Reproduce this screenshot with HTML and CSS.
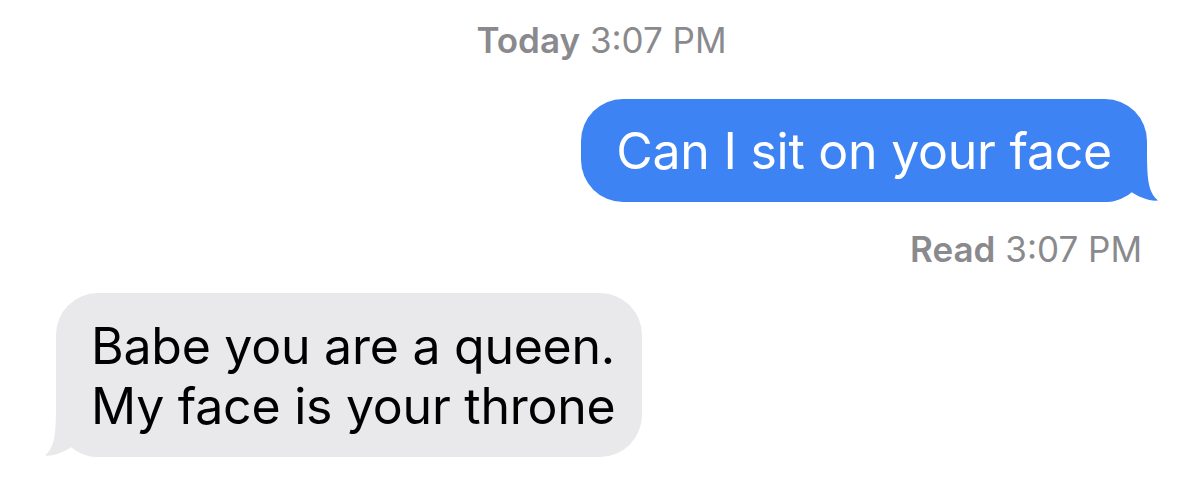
FILE: index.html
```html
<!DOCTYPE html>
<html>
<head>
<meta charset="utf-8">
<title>Messages</title>
<link rel="stylesheet" href="styles.css">
</head>
<body>
<div class="m-chat">
	<div class="stamp"><b>Today</b> 3:07 PM</div>

	<div class="row me">
		<div class="bubble blue">
			Can I sit on your face
			<svg class="tail" viewBox="0 0 60 53"><path d="M5 53L5 0L47 0C47 30 48 43 58 51.5C50 52.5 38 48 30 42C25 48 18 53 5 53Z"/></svg>
		</div>
	</div>
	<div class="read"><b>Read</b> 3:07 PM</div>

	<div class="row them">
		<div class="bubble gray">
			Babe you are a queen.<br>My face is your throne
			<svg class="tail" viewBox="0 0 60 53"><path d="M5 53L5 0L47 0C47 30 48 43 58 51.5C50 52.5 38 48 30 42C25 48 18 53 5 53Z"/></svg>
		</div>
	</div>
</div>
</body>
</html>
```

FILE: styles.css
```css
*{margin:0;padding:0;}
body{background:#fff;font-family:"Inter","Liberation Sans",sans-serif;}

.m-chat{display:flex;flex-direction:column;padding:21px 53px 0 56px;}

/** 时间 **/
.m-chat .stamp,.m-chat .read{font-size:35px;line-height:38px;color:#8a8a8e;}
.m-chat .stamp b,.m-chat .read b{font-weight:600;}
.m-chat .stamp{text-align:center;margin-bottom:40px;}
.m-chat .read{text-align:right;padding-right:5px;margin:28px 0 25px;}

/** 气泡 **/
.m-chat .row{display:flex;}
.m-chat .me{justify-content:flex-end;}
.m-chat .them{justify-content:flex-start;}
.m-chat .bubble{position:relative;isolation:isolate;font-size:50px;line-height:60px;letter-spacing:-0.25px;padding:22px 35px 21px;border-radius:42px;}
.m-chat .blue{background:#3e83f3;color:#fff;}
.m-chat .gray{background:#e9e9eb;color:#000;padding:23px 27px 21px 35px;}

/** 尾巴 **/
.m-chat .tail{position:absolute;bottom:0;z-index:-1;width:60px;height:53px;}
.m-chat .blue .tail{right:-13px;fill:#3e83f3;}
.m-chat .gray .tail{left:-13px;fill:#e9e9eb;transform:scaleX(-1);}
```
